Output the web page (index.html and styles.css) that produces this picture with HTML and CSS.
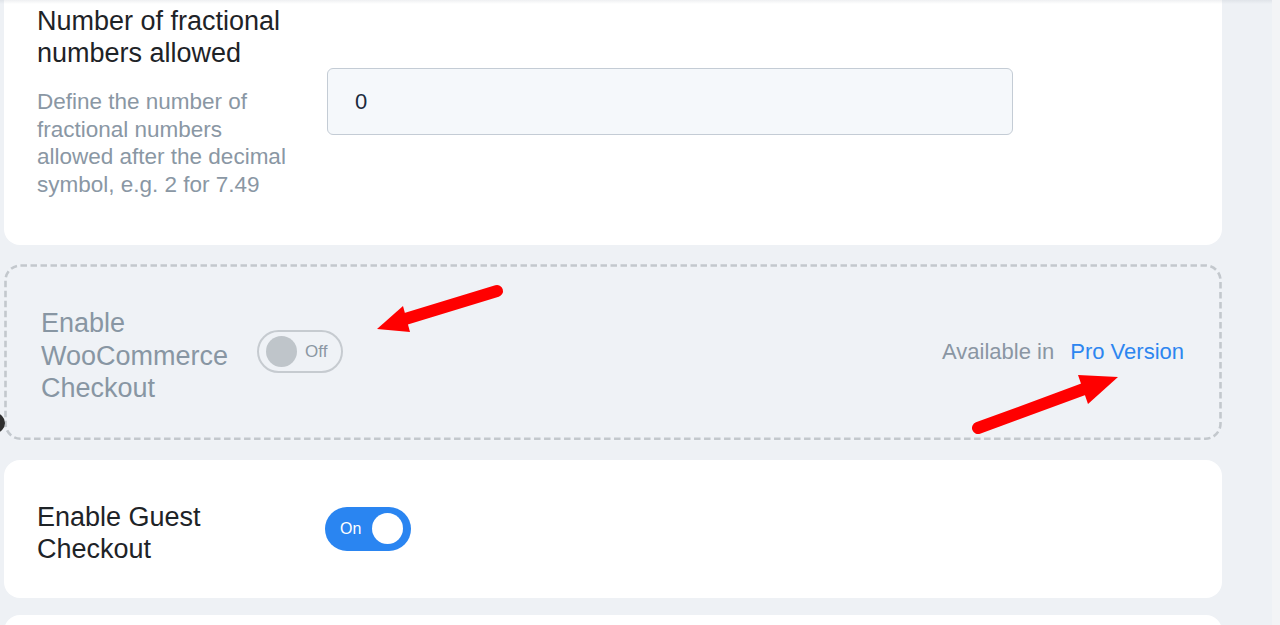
FILE: index.html
```html
<!DOCTYPE html>
<html lang="en">
<head>
<meta charset="utf-8">
<title>Checkout settings</title>
<link rel="stylesheet" href="styles.css">
</head>
<body>
<div class="page">
  <div class="list">
    <section class="card setting first">
      <div class="label-col">
        <h3 class="title">Number of fractional numbers allowed</h3>
        <p class="desc">Define the number of fractional numbers allowed after the decimal symbol, e.g. 2 for 7.49</p>
      </div>
      <div class="control">
        <input class="text-input" type="text" value="0">
      </div>
    </section>

    <section class="card card-pro">
      <svg class="dash-frame" aria-hidden="true"><rect></rect></svg>
      <div class="pro-left">
        <h3 class="title muted pro-title">Enable WooCommerce Checkout</h3>
        <span class="toggle off"><span class="knob"></span><span class="tlabel">Off</span></span>
      </div>
      <div class="pro-note">Available in <a class="pro-link" href="#">Pro Version</a></div>
    </section>

    <section class="card setting guest">
      <div class="label-col">
        <h3 class="title">Enable Guest Checkout</h3>
      </div>
      <span class="toggle on"><span class="tlabel">On</span><span class="knob"></span></span>
    </section>

    <section class="card stub"></section>
  </div>

  <svg class="annot" width="1280" height="625" viewBox="0 0 1280 625" aria-hidden="true">
    <circle cx="-5" cy="423" r="10" fill="#2f2f2f"/>
    <line x1="497" y1="291" x2="402" y2="320" stroke="#ff0000" stroke-width="12" stroke-linecap="round"/>
    <polygon points="377,329 403,306 410,332" fill="#ff0000"/>
    <line x1="978" y1="428" x2="1084" y2="389" stroke="#ff0000" stroke-width="12" stroke-linecap="round"/>
    <polygon points="1078,375 1118,377 1088,404" fill="#ff0000"/>
  </svg>
  <div class="top-shade"></div>
  <div class="side-strip"></div>
</div>
</body>
</html>
```

FILE: styles.css
```css
* { box-sizing: border-box; }

html, body {
  margin: 0;
  padding: 0;
  background: #eef1f5;
  font-family: "Liberation Sans", Arial, Helvetica, sans-serif;
  overflow: hidden;
}

.page {
  position: relative;
  width: 1280px;
  height: 625px;
  overflow: hidden;
}

.list {
  margin-top: -27px;
  padding-left: 4px;
  width: 1222px;
  display: flex;
  flex-direction: column;
  gap: 19px;
}

.card {
  position: relative;
  background: #ffffff;
  border-radius: 16px;
}

.setting {
  display: flex;
  align-items: center;
  gap: 35px;
  padding: 32px 33px 47px 33px;
}

.setting.guest {
  align-items: flex-start;
  gap: 33px;
  padding: 41px 33px 33px 33px;
}

.label-col {
  width: 255px;
  flex: none;
}

.title {
  margin: 0;
  font-size: 27px;
  line-height: 32.4px;
  font-weight: 400;
  color: #1e2327;
}

.title.muted { color: #8896a3; }

.desc {
  margin: 18.5px 0 0 0;
  font-size: 22.5px;
  line-height: 27.5px;
  color: #8a97a4;
}

.text-input {
  display: block;
  width: 686px;
  height: 67px;
  padding: 0 0 0 27px;
  background: #f5f8fb;
  border: 1px solid #c4ccd5;
  border-radius: 6px;
  font-family: "Liberation Sans", Arial, Helvetica, sans-serif;
  font-size: 22px;
  color: #1b2a3d;
  outline: none;
}

/* Pro card */
.card-pro {
  background: #eff2f6;
  display: flex;
  align-items: center;
  justify-content: space-between;
  padding: 43px 38px 36px 37px;
}

.dash-frame {
  position: absolute;
  left: 0;
  top: 0;
  width: 100%;
  height: 100%;
  overflow: visible;
  pointer-events: none;
}

.dash-frame rect {
  x: 1.5px;
  y: 1.5px;
  width: calc(100% - 3px);
  height: calc(100% - 3px);
  rx: 15px;
  ry: 15px;
  fill: none;
  stroke: #c3c8cd;
  stroke-width: 2.6px;
  stroke-dasharray: 6.5 3.5;
}

.pro-left {
  display: flex;
  align-items: flex-start;
  gap: 16px;
}

.pro-title { width: 200px; }

.pro-note {
  font-size: 22px;
  color: #8a96a3;
  margin-top: -7px;
}

.pro-link {
  color: #2d86f0;
  text-decoration: none;
  margin-left: 10px;
}

/* Toggles */
.toggle {
  flex: none;
  display: flex;
  align-items: center;
  width: 86px;
  border-radius: 22px;
}

.toggle .knob {
  width: 31px;
  height: 31px;
  border-radius: 50%;
  flex: none;
}

.toggle.off {
  height: 43px;
  margin-top: 23px;
  border: 2px solid #c6cbd0;
  padding-left: 7px;
  gap: 8px;
}

.toggle.off .knob { background: #bfc5ca; }

.toggle.off .tlabel {
  font-size: 17px;
  color: #8b97a3;
}

.toggle.on {
  height: 44px;
  margin-top: 6px;
  background: #2a85f1;
  padding: 0 8px 0 15px;
  justify-content: space-between;
}

.toggle.on .knob { background: #ffffff; }

.toggle.on .tlabel {
  font-size: 16px;
  color: #ffffff;
}

.stub {
  height: 60px;
  margin-top: -2px;
}

/* Overlays */
.annot {
  position: absolute;
  left: 0;
  top: 0;
  overflow: visible;
  pointer-events: none;
}

.top-shade {
  position: absolute;
  left: 0;
  top: 0;
  width: 1280px;
  height: 4px;
  background: linear-gradient(rgba(120, 130, 145, 0.12), rgba(120, 130, 145, 0));
}

.side-strip {
  position: absolute;
  right: 0;
  top: 0;
  width: 8px;
  height: 625px;
  background: #f3f4f6;
}
```
